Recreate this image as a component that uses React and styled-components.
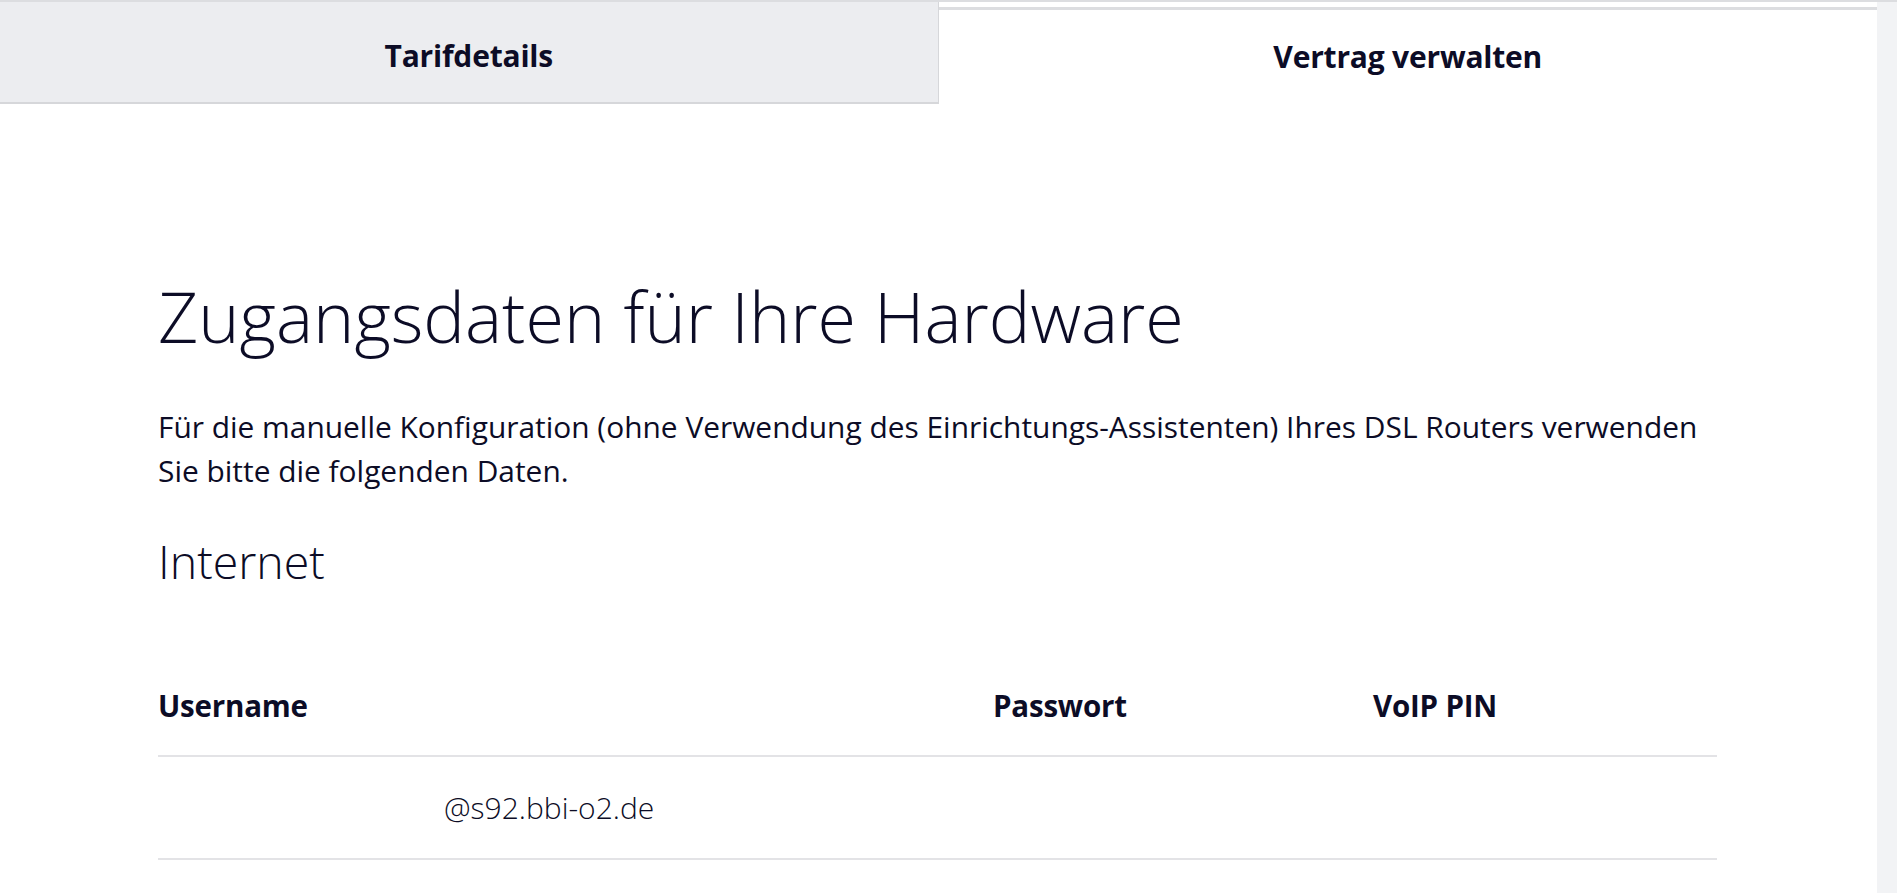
import React from 'react';
import styled, { createGlobalStyle } from 'styled-components';

const GlobalStyle = createGlobalStyle`
  html, body {
    margin: 0;
    padding: 0;
    background: #f2f3f5;
  }
  body {
    font-family: 'Open Sans', 'Noto Sans', sans-serif;
    color: #0c0c26;
  }
`;

const Page = styled.div`
  display: flex;
  min-height: 891px;
  border-top: 2px solid #dcdde0;
`;

const Main = styled.main`
  flex: 1;
  background: #ffffff;
`;

const Gutter = styled.aside`
  width: 20px;
  background: #f2f3f5;
`;

const TabBar = styled.nav`
  display: grid;
  grid-template-columns: 1fr 1fr;
  height: 102px;
`;

const Tab = styled.button`
  appearance: none;
  display: flex;
  align-items: center;
  justify-content: center;
  font-family: inherit;
  font-size: 30px;
  font-weight: 700;
  color: #0c0c26;
  cursor: pointer;
  padding: 0;
  padding-top: ${p => (p.$active ? '0' : '6px')};
  padding-bottom: ${p => (p.$active ? '2px' : '0')};
  background: ${p => (p.$active ? '#ffffff' : '#ecedf0')};
  border: none;
  border-top: ${p => (p.$active ? '3px solid #dcdde0' : 'none')};
  border-bottom: ${p => (p.$active ? 'none' : '2px solid #d6d7da')};
  border-right: ${p => (p.$active ? 'none' : '1px solid #d6d7da')};
  margin-top: ${p => (p.$active ? '5px' : '0')};
  letter-spacing: -0.2px;
`;

const Content = styled.section`
  padding: 170px 160px 0 158px;
`;

const Title = styled.h1`
  margin: 0;
  font-size: 70px;
  font-weight: 300;
  line-height: 84px;
`;

const Lead = styled.p`
  margin: 47px 0 0;
  max-width: 1559px;
  font-size: 29.9px;
  font-weight: 400;
  line-height: 44px;
`;

const Subtitle = styled.h2`
  margin: 38px 0 0;
  font-size: 46.5px;
  font-weight: 300;
  line-height: 60px;
`;

const Table = styled.div`
  margin-top: 97px;
  width: 1559px;
`;

const Row = styled.div`
  display: grid;
  grid-template-columns: 835px 380px 1fr;
  align-items: ${p => (p.$head ? 'start' : 'center')};
  height: ${p => (p.$head ? '67px' : '101px')};
  border-bottom: 2px solid #e3e3e6;
`;

const HeadCell = styled.div`
  font-size: 29.5px;
  font-weight: 700;
  line-height: 36px;
  letter-spacing: -0.2px;
`;

const Cell = styled.div`
  font-size: 30px;
  font-weight: 300;
  line-height: 36px;
`;

const Redacted = styled.span`
  display: inline-block;
  width: 286px;
`;

export default function App() {
  return (
    <>
      <GlobalStyle />
      <Page>
        <Main>
          <TabBar>
            <Tab>Tarifdetails</Tab>
            <Tab $active>Vertrag verwalten</Tab>
          </TabBar>
          <Content>
            <Title>Zugangsdaten für Ihre Hardware</Title>
            <Lead>
              Für die manuelle Konfiguration (ohne Verwendung des Einrichtungs-Assistenten) Ihres DSL Routers verwenden
              Sie bitte die folgenden Daten.
            </Lead>
            <Subtitle>Internet</Subtitle>
            <Table>
              <Row $head>
                <HeadCell>Username</HeadCell>
                <HeadCell>Passwort</HeadCell>
                <HeadCell>VoIP PIN</HeadCell>
              </Row>
              <Row>
                <Cell><Redacted />@s92.bbi-o2.de</Cell>
                <Cell />
                <Cell />
              </Row>
            </Table>
          </Content>
        </Main>
        <Gutter />
      </Page>
    </>
  );
}
